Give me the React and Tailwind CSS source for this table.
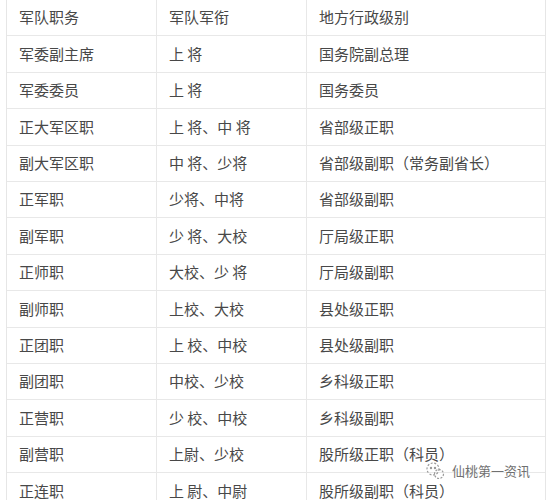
import React from "react";

const rows = [
  ["军队职务", "军队军衔", "地方行政级别"],
  ["军委副主席", "上 将", "国务院副总理"],
  ["军委委员", "上 将", "国务委员"],
  ["正大军区职", "上 将、中 将", "省部级正职"],
  ["副大军区职", "中 将、少将", "省部级副职（常务副省长）"],
  ["正军职", "少将、中将", "省部级副职"],
  ["副军职", "少 将、大校", "厅局级正职"],
  ["正师职", "大校、少 将", "厅局级副职"],
  ["副师职", "上校、大校", "县处级正职"],
  ["正团职", "上 校、中校", "县处级副职"],
  ["副团职", "中校、少校", "乡科级正职"],
  ["正营职", "少 校、中校", "乡科级副职"],
  ["副营职", "上尉、少校", "股所级正职（科员）"],
  ["正连职", "上 尉、中尉", "股所级副职（科员）"],
];

export default function App() {
  return (
    <div
      className="relative w-[551px] h-[500px] overflow-hidden bg-white text-[15px] text-[#484848]"
      style={{ fontFamily: '"Noto Sans CJK SC", "Noto Sans", sans-serif' }}
    >
      <div className="ml-[6px] mt-[-1px] w-[540px] border-l border-r border-t border-[#e6e6e6]">
        {rows.map((r, i) => (
          <div
            key={i}
            className="grid grid-cols-[150px_150px_1fr] h-[36.4px] border-b border-[#e8e8e8]"
          >
            <div className="flex items-center pl-[12px] border-r border-[#e8e8e8] whitespace-nowrap">
              {r[0]}
            </div>
            <div className="flex items-center pl-[12px] border-r border-[#e8e8e8] whitespace-nowrap">
              {r[1]}
            </div>
            <div className="flex items-center pl-[12px] whitespace-nowrap">{r[2]}</div>
          </div>
        ))}
      </div>
      <div className="absolute left-[424px] top-[461px] flex items-center gap-[6px] text-[13px] text-[#707070] [text-shadow:0_0_2px_#fff,0_0_2px_#fff]">
        <svg width="22" height="20" viewBox="0 0 22 20" fill="none" stroke="#9a9a9a" strokeWidth="1.2">
          <circle cx="9" cy="8" r="6" strokeDasharray="2 1.6" />
          <circle cx="15" cy="13" r="4.5" strokeDasharray="2 1.4" />
          <circle cx="7" cy="7" r="0.6" fill="#9a9a9a" />
          <circle cx="11" cy="7" r="0.6" fill="#9a9a9a" />
        </svg>
        <span>仙桃第一资讯</span>
      </div>
    </div>
  );
}
